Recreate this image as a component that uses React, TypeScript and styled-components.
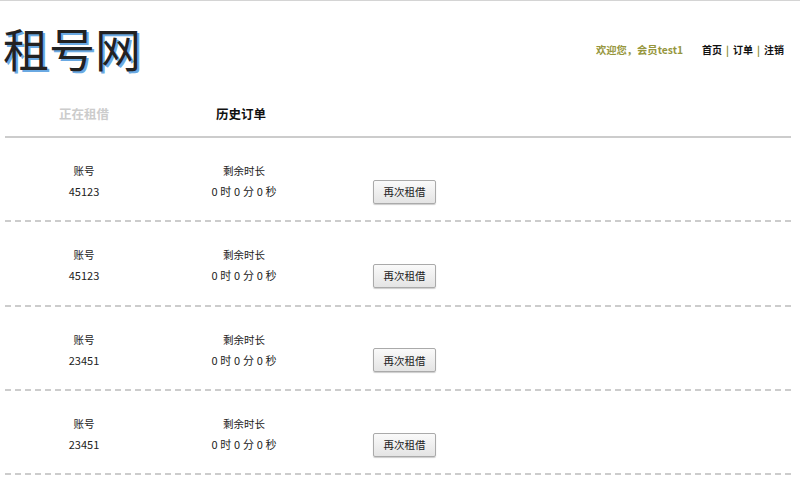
import React from "react";
import styled, { createGlobalStyle } from "styled-components";

const orders = [
  { id: 1, account: "45123" },
  { id: 2, account: "45123" },
  { id: 3, account: "23451" },
  { id: 4, account: "23451" },
];

const GlobalStyle = createGlobalStyle`
  html, body {
    margin: 0;
    padding: 0;
    background: #fff;
    height: 477px;
    overflow: hidden;
  }
  body {
    font-family: "Noto Sans CJK SC", "Open Sans", sans-serif;
    color: #333;
  }
`;

const Page = styled.div`
  width: 800px;
  border-top: 1px solid #d4d4d4;
`;

const Header = styled.header`
  display: flex;
  align-items: center;
  justify-content: space-between;
  height: 92px;
  padding: 0 16px 0 3px;
`;

const Logo = styled.h1`
  margin: 0;
  font-size: 46px;
  font-weight: 400;
  line-height: 1;
  color: #222;
  text-shadow: 2px 2px 0 #6aa9e2;
  font-family: "Noto Sans CJK SC", sans-serif;
`;

const UserBar = styled.div`
  display: flex;
  align-items: center;
  gap: 19px;
  padding-top: 4px;
  font-size: 10.3px;
  font-weight: 700;
`;

const Welcome = styled.span`
  color: #96963c;
`;

const Nav = styled.nav`
  display: flex;
  gap: 4px;
  font-size: 10px;
  color: #8a8a30;
`;

const NavLink = styled.a`
  color: #111;
`;

const Tabs = styled.div`
  display: flex;
  width: 786px;
  margin-left: 5px;
  height: 43px;
  border-bottom: 2px solid #ccc;
`;

const Tab = styled.div<{ $active?: boolean }>`
  width: ${({ $active }) => ($active ? 156 : 158)}px;
  text-align: center;
  font-size: 12.5px;
  font-weight: 700;
  line-height: 42px;
  color: ${({ $active }) => ($active ? "#111" : "#ccc")};
`;

const Row = styled.div`
  display: flex;
  align-items: center;
  width: 786px;
  height: 78.33px;
  padding-top: 4px;
  margin-left: 5px;
  border-bottom: 2px dashed #ccc;
`;

const Cell = styled.div<{ $width: number }>`
  width: ${({ $width }) => $width}px;
  display: flex;
  flex-direction: column;
  align-items: center;
  gap: 4px;
  font-size: 11px;
  line-height: 16px;
  color: #222;
`;

const Label = styled.span`
  font-size: 10.5px;
`;

const Duration = styled.span`
  word-spacing: 0.3px;
`;

const AgainButton = styled.button`
  width: 63px;
  height: 24px;
  margin: 21px 0 0 48px;
  padding: 0;
  font-family: inherit;
  font-size: 10.5px;
  color: #222;
  background: linear-gradient(#fafafa, #e4e4e4);
  border: 1px solid #aaa;
  border-radius: 2px;
  box-shadow: 0 1px 1px rgba(0, 0, 0, 0.2);
`;

export default function App() {
  return (
    <Page>
      <GlobalStyle />
      <Header>
        <Logo>租号网</Logo>
        <UserBar>
          <Welcome>欢迎您，会员test1</Welcome>
          <Nav>
            <NavLink>首页</NavLink>|<NavLink>订单</NavLink>|<NavLink>注销</NavLink>
          </Nav>
        </UserBar>
      </Header>
      <Tabs>
        <Tab>正在租借</Tab>
        <Tab $active>历史订单</Tab>
      </Tabs>
      {orders.map((order) => (
        <Row key={order.id}>
          <Cell $width={158}>
            <Label>账号</Label>
            <span>{order.account}</span>
          </Cell>
          <Cell $width={162}>
            <Label>剩余时长</Label>
            <Duration>0 时 0 分 0 秒</Duration>
          </Cell>
          <AgainButton>再次租借</AgainButton>
        </Row>
      ))}
    </Page>
  );
}
